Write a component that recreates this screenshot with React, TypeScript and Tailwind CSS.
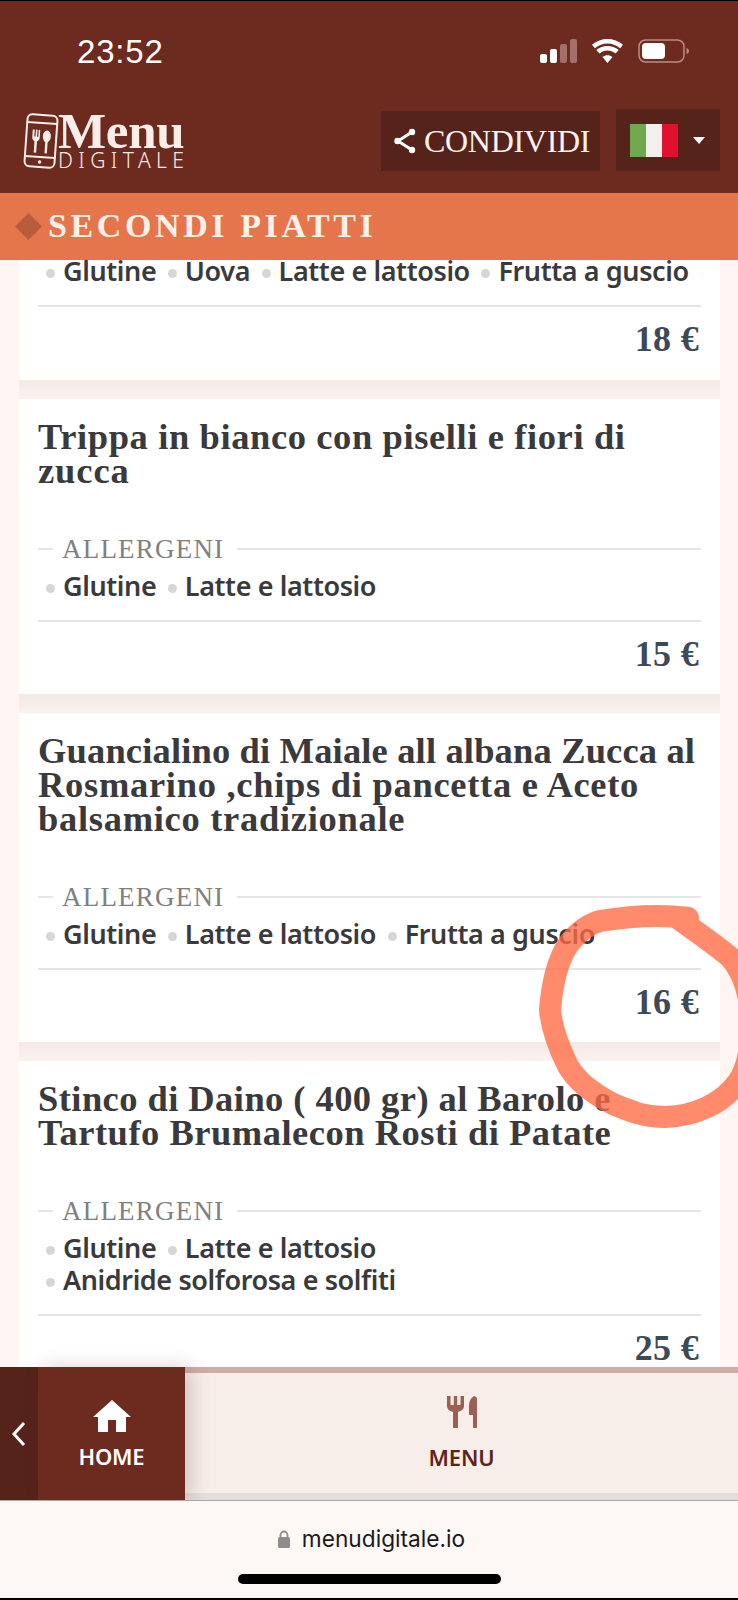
function Chips({ rows }: { rows: string[][] }) {
  return (
    <div className="mt-[6px]">
      {rows.map((r, i) => (
        <div key={i} className="flex items-center h-[32px]">
          {r.map((c) => (
            <div key={c} className="flex items-center ml-[8px] mr-[3.5px]">
              <span className="w-[9px] h-[9px] rounded-full bg-[#d6d6d6] mt-[4px]" />
              <span className="ml-[8px] text-[27px] leading-[32px] font-semibold tracking-[-0.4px] text-[#3a3a3c] [font-family:'Noto_Sans',sans-serif] whitespace-nowrap">{c}</span>
            </div>
          ))}
        </div>
      ))}
    </div>
  );
}

function Allergeni({ rows }: { rows: string[][] }) {
  return (
    <div>
      <div className="flex items-center h-[30px]">
        <div className="w-[15px] h-[2px] bg-[#e6e6e6]" />
        <span className="ml-[9px] text-[27px] leading-[30px] tracking-[1.2px] text-[#808080] [font-family:'Liberation_Serif',serif]">ALLERGENI</span>
        <div className="ml-[13px] flex-1 h-[2px] bg-[#e6e6e6]" />
      </div>
      <Chips rows={rows} />
    </div>
  );
}

function Price({ v }: { v: string }) {
  return (
    <div className="mt-[18px] border-t-2 border-[#e4e4e4] pt-[12px] pb-[20px] pr-[2px] text-right text-[36px] leading-[40px] font-bold tracking-[0.3px] text-[#3d4957] [font-family:'Liberation_Serif',serif]">
      {v}
    </div>
  );
}

function Gap() {
  return <div className="h-[19px] bg-gradient-to-b from-[#f3eae6] to-[#fbf2ef]" />;
}

function Card({ title, rows, price }: { title: [string, string][]; rows: string[][]; price: string }) {
  return (
    <>
      <div className="bg-white px-[19px] pt-[21px]">
        <div className="mb-[46px]">
          {title.map(([t, track]) => (
            <div key={t} className={`text-[36.5px] leading-[34px] font-bold text-[#3a3a3c] [font-family:'Liberation_Serif',serif] whitespace-nowrap ${track}`}>{t}</div>
          ))}
        </div>
        <Allergeni rows={rows} />
        <Price v={price} />
      </div>
      <Gap />
    </>
  );
}

function Logo() {
  return (
    <div className="flex items-start">
      <svg width="36" height="56" viewBox="0 0 36 56" fill="none" className="shrink-0">
        <g transform="rotate(4 18 28)">
          <rect x="3" y="2" width="30" height="52" rx="5" stroke="#fbeee9" strokeWidth="2" />
          <path d="M3 10h30M3 44h30" stroke="#fbeee9" strokeWidth="2" />
          <path d="M9 17v8c0 2 1.500 3 2.500 3.500V40h2.500V28.500c1-.5 2.500-1.500 2.500-3.500v-8h-1.500v7h-1.200v-7h-1.600v7H11v-7z" fill="#fbeee9" />
          <ellipse cx="23.500" cy="23" rx="4" ry="6" fill="#fbeee9" />
          <rect x="22.300" y="28" width="2.400" height="12" fill="#fbeee9" />
          <circle cx="18" cy="49" r="1.800" fill="#fbeee9" />
        </g>
      </svg>
      <div className="ml-[-1px] text-[#fbeee9]">
        <div className="text-[51px] leading-[36px] font-bold tracking-[-0.3px] [font-family:'Liberation_Serif',serif]">Menu</div>
        <div className="text-[21px] leading-[20px] mt-[1px] tracking-[5.4px] font-light [font-family:'Noto_Sans',sans-serif]">DIGITALE</div>
      </div>
    </div>
  );
}

export default function App() {
  return (
    <div className="relative w-[738px] h-[1600px] overflow-hidden flex flex-col bg-[#fff5f2]">
      <header className="h-[193px] shrink-0 bg-[#6d2a1e] border-t border-black z-10">
        <div className="flex items-center justify-between h-[100px] pl-[77px] pr-[49px]">
          <span className="text-[33px] leading-none font-medium tracking-[0.8px] text-white [font-family:'Liberation_Sans',sans-serif]">23:52</span>
          <div className="flex items-center gap-[15px]">
            <svg width="37" height="24" viewBox="0 0 37 24">
              <rect x="0" y="15" width="7" height="9" rx="2" fill="#fff" />
              <rect x="10" y="10" width="7" height="14" rx="2" fill="#fff" />
              <rect x="20" y="5" width="7" height="19" rx="2" fill="#a4716a" />
              <rect x="30" y="0" width="7" height="24" rx="2" fill="#a4716a" />
            </svg>
            <svg width="31" height="24" viewBox="0 0 31 24">
              <path d="M15.500 24l-5-6c3-2.500 7-2.500 10 0zM7.500 14.500L4.300 11c6.500-5.500 16-5.500 22.400 0l-3.200 3.500c-4.700-4-11.300-4-16 0zM2.800 9.300L0 5.800c9-7.700 22-7.700 31 0l-2.800 3.500C20.700 3 10.300 3 2.800 9.300z" fill="#fff" />
            </svg>
            <svg width="51" height="24" viewBox="0 0 51 24">
              <rect x="1" y="1" width="45" height="22" rx="6.500" fill="none" stroke="#b98c85" strokeWidth="1.500" />
              <rect x="4" y="4" width="23" height="16" rx="4" fill="#fff" />
              <path d="M48.500 9c1.500.5 2.500 1.500 2.500 3s-1 2.500-2.500 3z" fill="#b98c85" />
            </svg>
          </div>
        </div>
        <div className="flex items-start pl-[23px] pr-[18px] mt-[12px]">
          <Logo />
          <div className="ml-auto flex items-start gap-[16px]">
            <div className="w-[219px] h-[60px] mt-[-2px] bg-[#55231a] flex items-center pl-[12px]">
              <svg width="23" height="26" viewBox="0 0 23 26" fill="none">
                <path d="M19 4L5 13l14 9" stroke="#fff" strokeWidth="3" />
                <circle cx="19" cy="4" r="3.200" fill="#fff" />
                <circle cx="19" cy="22" r="3.200" fill="#fff" />
                <circle cx="4.500" cy="13" r="3.200" fill="#fff" />
              </svg>
              <span className="ml-[8px] text-[32px] leading-none text-[#fdf3ef] tracking-[-0.3px] [font-family:'Liberation_Serif',serif]">CONDIVIDI</span>
            </div>
            <div className="w-[104px] h-[62px] mt-[-4px] bg-[#55231a] flex items-center pl-[14px]">
              <div className="flex w-[48px] h-[33px]">
                <div className="flex-1 bg-[#6fa84f]" />
                <div className="flex-1 bg-[#f2efee]" />
                <div className="flex-1 bg-[#e0112d]" />
              </div>
              <div className="ml-[15px] w-0 h-0 border-x-[6px] border-x-transparent border-t-[7px] border-t-white" />
            </div>
          </div>
        </div>
      </header>

      <div className="h-[67px] shrink-0 bg-[#e5754a] flex items-center pl-[19px] z-10">
        <div className="w-[19px] h-[19px] rotate-45 bg-[#b85c3c]" />
        <span className="ml-[10px] mt-[-1px] text-[34px] leading-none font-bold tracking-[3.6px] text-[#fdf1e9] [font-family:'Liberation_Serif',serif]">SECONDI PIATTI</span>
      </div>

      <main className="flex-1 min-h-0 overflow-hidden pl-[19px] pr-[18px]">
        <div className="bg-white px-[19px] pb-[1px] mt-[-11px]">
          <Chips rows={[["Glutine", "Uova", "Latte e lattosio", "Frutta a guscio"]]} />
          <Price v="18 €" />
        </div>
        <Gap />
        <Card
          title={[
            ["Trippa in bianco con piselli e fiori di", "tracking-[0.6px]"],
            ["zucca", "tracking-[0.9px]"],
          ]}
          rows={[["Glutine", "Latte e lattosio"]]}
          price="15 €"
        />
        <Card
          title={[
            ["Guancialino di Maiale all albana Zucca al", "tracking-[0.15px]"],
            ["Rosmarino ,chips di pancetta e Aceto", "tracking-[0.7px]"],
            ["balsamico tradizionale", "tracking-[0.7px]"],
          ]}
          rows={[["Glutine", "Latte e lattosio", "Frutta a guscio"]]}
          price="16 €"
        />
        <Card
          title={[
            ["Stinco di Daino ( 400 gr) al Barolo e", "tracking-[0.43px]"],
            ["Tartufo Brumalecon Rosti di Patate", "tracking-[0.5px]"],
          ]}
          rows={[["Glutine", "Latte e lattosio"], ["Anidride solforosa e solfiti"]]}
          price="25 €"
        />
      </main>

      <nav className="h-[133px] shrink-0 flex z-10">
        <div className="w-[38px] bg-[#55231a] flex items-center justify-center">
          <svg width="16" height="26" viewBox="0 0 16 26" fill="none">
            <path d="M13 2L3 13l10 11" stroke="#fff" strokeWidth="3" />
          </svg>
        </div>
        <div className="w-[147px] bg-[#6d2a1e] flex flex-col items-center pt-[33px] z-10 shadow-[6px_0_18px_rgba(60,30,20,0.2)]">
          <svg width="38" height="32" viewBox="0 0 38 32">
            <path d="M19 0L38 17h-5v15H23V20h-8v12H5V17H0z" fill="#fff" />
          </svg>
          <span className="mt-[9px] text-[22px] leading-[30px] font-semibold tracking-[-0.2px] text-white [font-family:'Noto_Sans',sans-serif]">HOME</span>
        </div>
        <div className="flex-1 flex flex-col bg-[#f7ede9]">
          <div className="h-[6px] bg-[#cfaca5]" />
          <div className="flex-1 flex flex-col items-center pt-[23px]">
            <svg width="30" height="32" viewBox="0 0 30 32">
              <path d="M0 0h3.500v9h3.300V0h3.400v9h3.300V0H17v10c0 3-2.500 5-6 6v16H6V16c-3.500-1-6-3-6-6z" fill="#9c5f53" />
              <path d="M27 0c2 .5 3 1.500 3 3v29h-4V19h-4V9c0-4 2-7 5-9z" fill="#9c5f53" />
            </svg>
            <span className="mt-[14px] text-[22px] leading-[30px] font-semibold tracking-[-0.2px] text-[#5e2419] [font-family:'Noto_Sans',sans-serif]">MENU</span>
          </div>
          <div className="h-[7px] bg-[#e3dedc]" />
        </div>
      </nav>

      <footer className="h-[100px] shrink-0 bg-[#fdf8f5] border-t border-[#a9a6a5] border-b-2 border-b-black flex flex-col items-center z-10">
        <div className="flex items-center mt-[24px] h-[28px] pl-[5px]">
          <svg width="12" height="18" viewBox="0 0 12 18">
            <path d="M2.500 8V5a3.500 3.500 0 017 0v3" fill="none" stroke="#8f8c8e" strokeWidth="1.800" />
            <rect x="0" y="7" width="12" height="11" rx="1.500" fill="#8f8c8e" />
          </svg>
          <span className="ml-[12px] text-[22.7px] leading-none text-[#1a1a1a] [font-family:'Inter',sans-serif]">menudigitale.io</span>
        </div>
        <div className="mt-[21px] w-[263px] h-[10px] rounded-full bg-black" />
      </footer>

      <svg className="absolute left-0 top-0 pointer-events-none z-20" width="738" height="1600" viewBox="0 0 738 1600" fill="none">
        <path
          d="M688 918C660 914 630 916 600 921C585 925 572 938 566 948C556 965 552 985 550 1010C552 1032 560 1050 568 1066C576 1080 590 1092 613 1104C632 1112 645 1117 665 1117C695 1116 722 1104 738 1082C750 1065 753 1035 750 1005C747 985 740 968 730 957C715 945 697 932 680 920"
          stroke="#ff6a42"
          strokeOpacity="0.78"
          strokeWidth="22"
          strokeLinecap="round"
          strokeLinejoin="round"
        />
      </svg>
    </div>
  );
}
